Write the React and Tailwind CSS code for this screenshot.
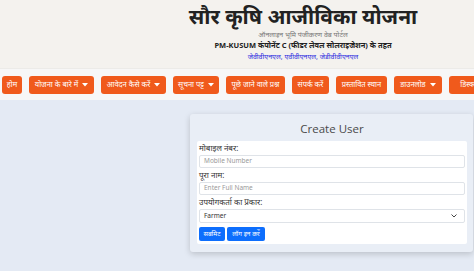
import React from 'react';

const font = { fontFamily: '"Noto Sans", "Open Sans", sans-serif' };

const Caret = () => (
  <svg width="6" height="4" viewBox="0 0 6 4" className="ml-[4px] inline-block shrink-0">
    <path d="M0 0 L6 0 L3 3.5 Z" fill="white" />
  </svg>
);

const navItems = [
  { label: 'होम', w: 'w-[20px]' },
  { label: 'योजना के बारे में', w: 'w-[65px]', caret: true },
  { label: 'आवेदन कैसे करें', w: 'w-[65px]', caret: true },
  { label: 'सूचना पट्ट', w: 'w-[46px]', caret: true },
  { label: 'पूछे जाने वाले प्रश्न', w: 'w-[59px]' },
  { label: 'संपर्क करें', w: 'w-[37px]' },
  { label: 'प्रस्तावित स्थान', w: 'w-[51px]' },
  { label: 'डाउनलोड', w: 'w-[48px]', caret: true },
  { label: 'डिस्क्लेमर', w: 'w-[48px]' },
];

const Field = ({ label, children }) => (
  <div className="flex flex-col">
    <div className="h-[14px] flex items-center text-[8px] text-[#333] leading-none">{label}</div>
    {children}
  </div>
);

const Input = ({ placeholder }) => (
  <div className="h-[13px] border border-[#dfe3e8] rounded-[2px] bg-white flex items-center px-[4px] text-[6.5px] text-[#9a9a9a] leading-none">
    {placeholder}
  </div>
);

export default function App() {
  return (
    <div className="w-[474px] h-[271px] overflow-hidden flex flex-col bg-[#e4eaf4]" style={font}>
      <header className="h-[68px] bg-[#f4f2ee] flex shrink-0">
        <div className="w-[132px] shrink-0" />
        <div className="flex-1 flex flex-col items-center pt-[3px]">
          <h1 className="text-[21px] font-bold text-[#222] leading-[27px]">सौर कृषि आजीविका योजना</h1>
          <p className="text-[7px] text-[#777] leading-[10px]">ऑनलाइन भूमि पंजीकरण वेब पोर्टल</p>
          <p className="text-[7.5px] font-bold text-[#222] leading-[11px]">PM-KUSUM कंपोनेंट C (फीडर लेवल सोलराइजेशन) के तहत</p>
          <p className="text-[7px] text-[#2a2ae0] leading-[11px]">जेवीवीएनएल, एवीवीएनएल, जेडीवीवीएनएल</p>
        </div>
      </header>
      <nav className="h-[32px] bg-[#f7f7f7] flex items-center gap-[7px] pl-[2px] shrink-0 overflow-hidden border-t border-[#ecebe8]">
        {navItems.map((item) => (
          <div
            key={item.label}
            className={`${item.w} h-[18px] shrink-0 rounded-[3px] bg-[#f05a1c] text-white text-[7.5px] leading-none flex items-center justify-center whitespace-nowrap overflow-hidden`}
          >
            {item.label}
            {item.caret && <Caret />}
          </div>
        ))}
      </nav>
      <main className="flex-1 flex pl-[190px] pt-[14px]">
        <div className="w-[283px] h-[138px] bg-[#e9eef6] rounded-[3px] shadow-[0_2px_6px_rgba(0,0,0,0.18)] flex flex-col px-[7px] pr-[6px] pb-[8px]">
          <div className="h-[27px] flex items-center justify-center text-[11.5px] text-[#4a4a4a] pt-[2px]" style={{ fontFamily: '"Open Sans", sans-serif' }}>
            Create User
          </div>
          <div className="flex-1 bg-white rounded-[2px] px-[2px] flex flex-col">
            <Field label="मोबाइल नंबर:">
              <Input placeholder="Mobile Number" />
            </Field>
            <Field label="पूरा नाम:">
              <Input placeholder="Enter Full Name" />
            </Field>
            <Field label="उपयोगकर्ता का प्रकार:">
              <div className="h-[14px] border border-[#dfe3e8] rounded-[2px] bg-white flex items-center justify-between px-[4px] text-[6.5px] text-[#333] leading-none">
                <span>Farmer</span>
                <svg width="6" height="4" viewBox="0 0 6 4" className="mr-[3px]">
                  <path d="M0.5 0.5 L3 3 L5.5 0.5" stroke="#444" strokeWidth="1" fill="none" />
                </svg>
              </div>
            </Field>
            <div className="flex gap-[2px] mt-[4px]">
              <div className="w-[26px] h-[14px] bg-[#0d6efd] rounded-[2px] text-white text-[6.5px] flex items-center justify-center leading-none">सबमिट</div>
              <div className="w-[38px] h-[14px] bg-[#0d6efd] rounded-[2px] text-white text-[6.5px] flex items-center justify-center leading-none">लॉग इन करें</div>
            </div>
          </div>
        </div>
      </main>
    </div>
  );
}
